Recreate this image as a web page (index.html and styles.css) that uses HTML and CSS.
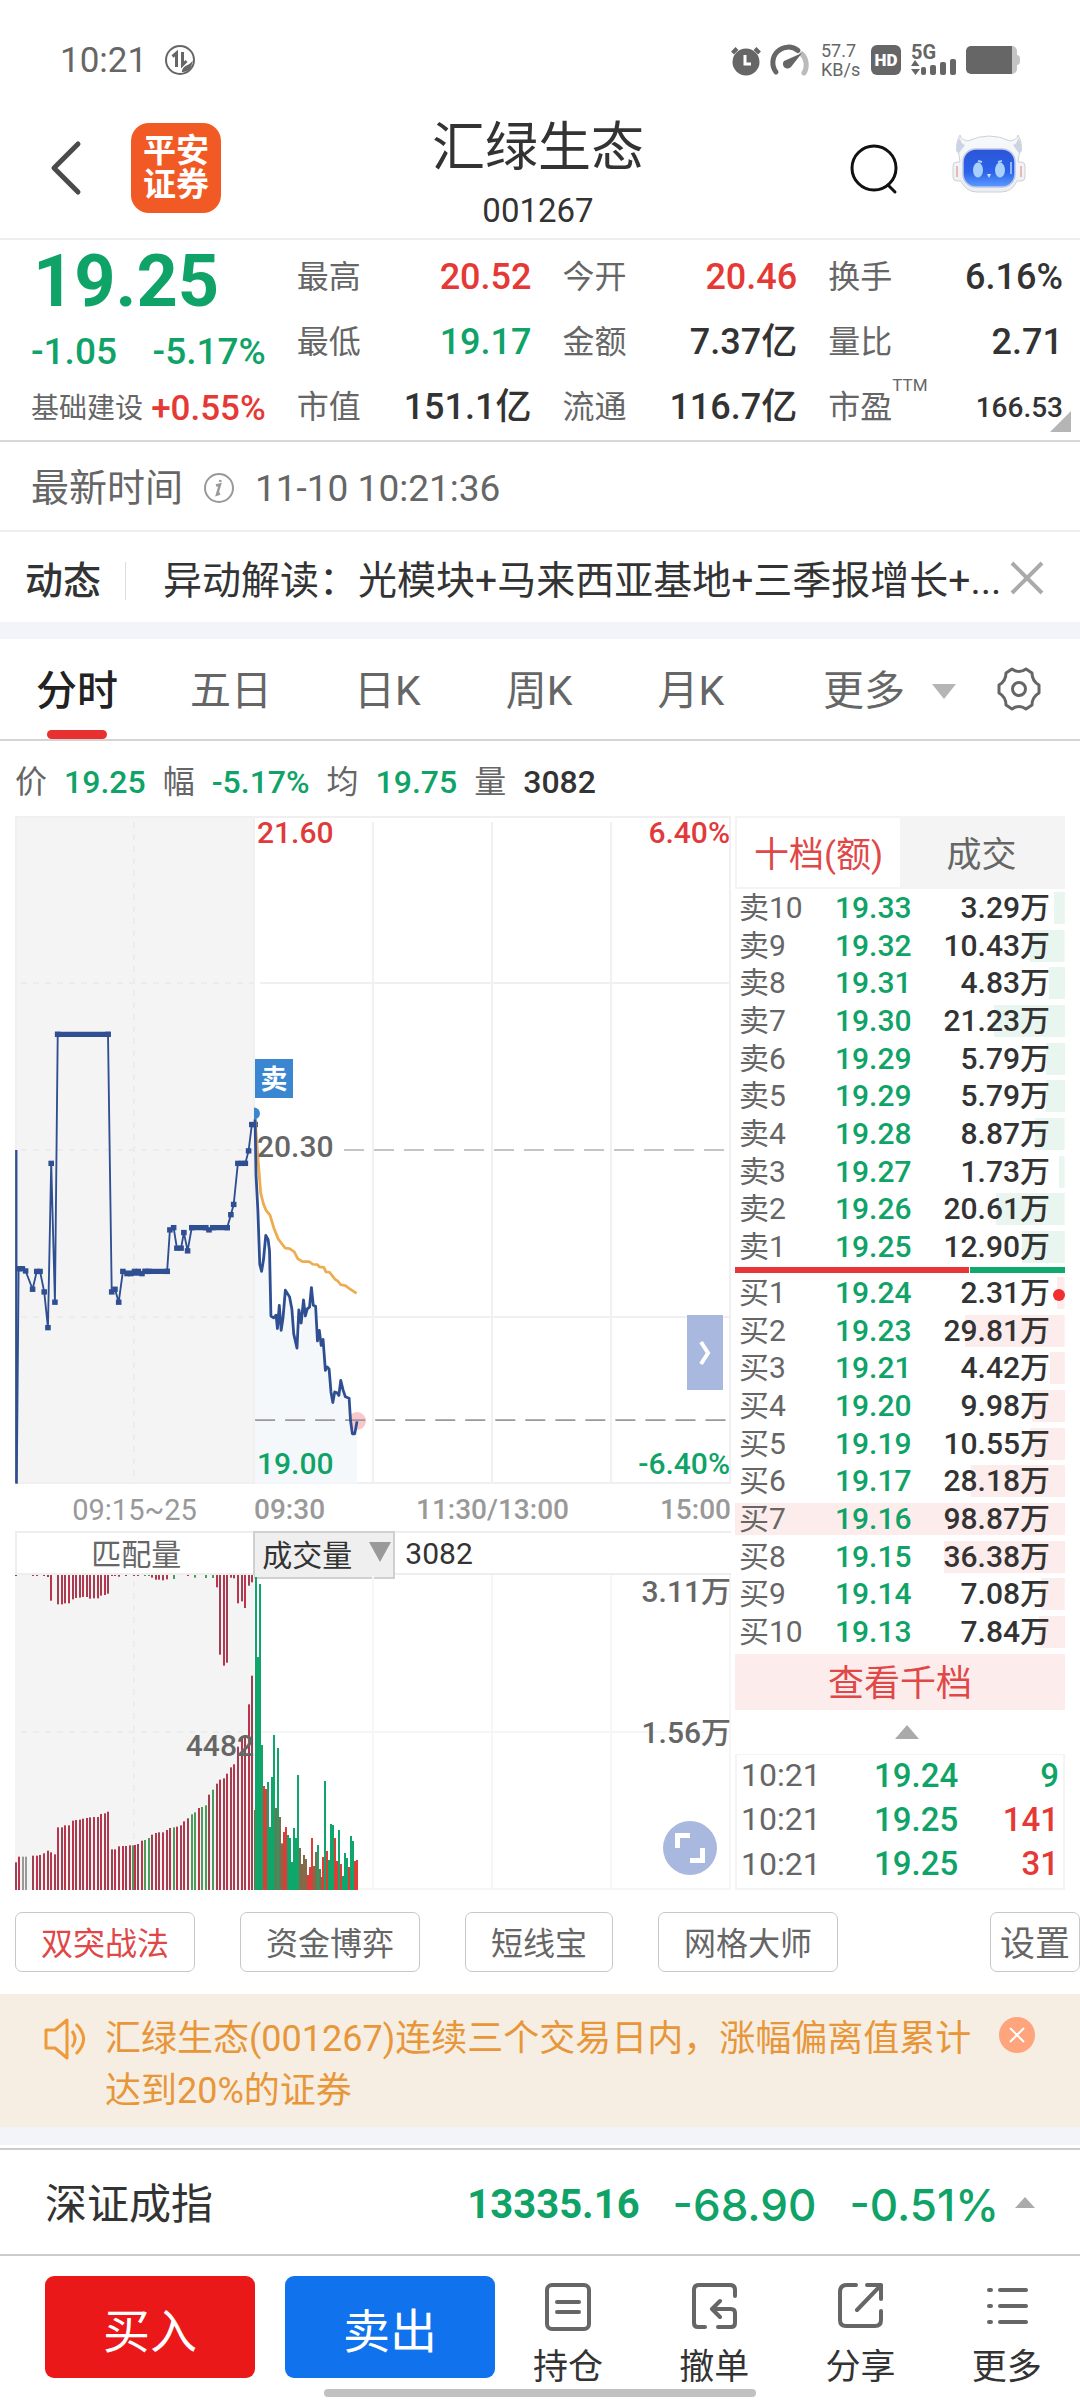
FILE: index.html
```html
<!DOCTYPE html>
<html lang="zh-CN">
<head>
<meta charset="utf-8">
<meta name="viewport" content="width=device-width, initial-scale=1">
<title>汇绿生态 001267</title>
<link rel="stylesheet" href="styles.css">
</head>
<body>
<div class="status">
  <span class="status-time">10:21</span>
  <svg class="status-left-icon" width="30" height="30" viewBox="0 0 30 30" fill="none" stroke="#666" stroke-width="2"><circle cx="15" cy="15" r="14"/><path d="M7.500 11.500 11.500 8v14M17.500 7v13l4-4" stroke-width="3"/><path d="M18 26c1-5 5-4 8-7-1 4-4 7-8 7z" fill="#666"/></svg>
  <div class="status-icons">
    <svg width="30" height="30" viewBox="0 0 30 30" fill="none" stroke="#666"><circle cx="15" cy="17" r="13.500" fill="#666" stroke="none"/><path d="M1.500 8 6 3.500M28.500 8 24 3.500" stroke-width="4"/><path d="M14 10v9h6" stroke="#fff" stroke-width="3"/></svg>
    <svg width="36" height="30" viewBox="0 0 36 30" fill="none" stroke-width="5" stroke-linecap="round"><path d="M33 28A16 16 0 0 0 31 9" stroke="#bbb"/><path d="M5 27A15.500 15.500 0 0 1 27 5.500" stroke="#666"/><path d="M31 8 20 22a4.500 4.500 0 0 1-7-6z" fill="#666" stroke="none"/></svg>
    <span class="net-speed">57.7<br>KB/s</span>
    <span class="hd">HD</span>
    <svg class="signal" width="45" height="40" viewBox="0 -4 45 40" fill="#666"><text class="signal-text" x="0" y="15">5G</text><path d="M4 16 8.500 22H0zM0 25h9l-4.500 6z"/><rect x="10" y="23" width="5" height="8" rx="2"/><rect x="19" y="21" width="6" height="10" rx="2"/><rect x="29" y="18" width="6" height="13" rx="2"/><rect x="39" y="15" width="6" height="16" rx="2"/></svg>
    <svg width="54" height="28" viewBox="0 0 54 28"><path d="M44 0h2a5 5 0 0 1 5 5v4q3 0 3 4v2q0 4-3 4v4a5 5 0 0 1-5 5h-2z" fill="#c4c4c4"/><path d="M5 0h41v28H5a5 5 0 0 1-5-5V5a5 5 0 0 1 5-5z" fill="#666"/></svg>
  </div>
</div>

<header class="header">
  <div class="header-left">
    <button class="icon-button" aria-label="返回"><svg width="32" height="54" viewBox="0 0 32 54" fill="none" stroke="#4a4a4a" stroke-width="5" stroke-linecap="round" stroke-linejoin="round"><path d="M28 3 4 27l24 24"/></svg></button>
    <div class="logo">平安<br>证券</div>
  </div>
  <div class="header-title">
    <h1>汇绿生态</h1>
    <p>001267</p>
  </div>
  <div class="header-right">
    <button class="icon-button" aria-label="搜索"><svg width="48" height="50" viewBox="0 0 48 50" fill="none" stroke="#111" stroke-width="3" stroke-linecap="round"><circle cx="24" cy="24" r="22"/><path d="m38 41 7 7"/></svg></button>
    <button class="icon-button robot" aria-label="智能助手"><svg width="74" height="60" viewBox="0 0 74 60">
      <defs>
        <linearGradient id="face" x1="0" y1="0" x2="0" y2="1"><stop offset="0" stop-color="#2c55d6"/><stop offset=".6" stop-color="#2b62ea"/><stop offset="1" stop-color="#5b9bff"/></linearGradient>
        <linearGradient id="shell" x1="0" y1="0" x2="0" y2="1"><stop offset="0" stop-color="#f8f9fa"/><stop offset="1" stop-color="#eceef2"/></linearGradient>
      </defs>
      <g fill="url(#shell)" stroke="#cdd0d6" stroke-width="1">
        <path d="M8 1q1 5 8 6 21-10 42 0 7-1 8-6 6 10 1 20l-1 7h3q4 0 4 4v11q0 4-4 4h-4q-5 11-16 11H25q-11 0-16-11H5q-4 0-4-4V32q0-4 4-4h3l-1-7Q2 11 8 1z"/>
      </g>
      <path d="M5 32v11M69 32v11" stroke="#e9b9b4" stroke-width="2"/>
      <path d="M4 17Q4 9 8 4q1 6 5 7l-6 8zM70 17q0-8-4-13-1 6-5 7l6 8z" fill="#ccd3e4"/>
      <rect x="11" y="15" width="52" height="38" rx="13" fill="url(#face)" stroke="#b9c6ea" stroke-width="1.500"/>
      <ellipse cx="26" cy="36" rx="5" ry="7.500" fill="#a9d0fb"/><ellipse cx="48" cy="36" rx="5" ry="7.500" fill="#a9d0fb"/>
      <path d="m26 27 4 1M50 27l-4 1" stroke="#a9d0fb" stroke-width="2"/>
      <path d="M35 40h4l-2 4z" fill="#cfe4ff"/><path d="M59 28v12" stroke="#8db6ff" stroke-width="2"/>
    </svg></button>
  </div>
</header>

<section class="quote">
  <div class="quote-main">
    <strong class="last down">19.25</strong>
    <div class="change down"><span>-1.05</span><span>-5.17%</span></div>
    <div class="sector"><span>基础建设</span><b class="up">+0.55%</b></div>
  </div>
  <dl class="quote-col">
    <div><dt>最高</dt><dd class="up">20.52</dd></div>
    <div><dt>最低</dt><dd class="down">19.17</dd></div>
    <div><dt>市值</dt><dd>151.1亿</dd></div>
  </dl>
  <dl class="quote-col">
    <div><dt>今开</dt><dd class="up">20.46</dd></div>
    <div><dt>金额</dt><dd>7.37亿</dd></div>
    <div><dt>流通</dt><dd>116.7亿</dd></div>
  </dl>
  <dl class="quote-col">
    <div><dt>换手</dt><dd>6.16%</dd></div>
    <div><dt>量比</dt><dd>2.71</dd></div>
    <div><dt>市盈<sup>TTM</sup></dt><dd class="small">166.53</dd></div>
  </dl>
  <span class="corner"></span>
</section>

<div class="time-row">
  <span>最新时间</span>
  <svg width="32" height="32" viewBox="0 0 32 32" fill="none" stroke="#999" stroke-width="2"><circle cx="16" cy="16" r="14"/><path d="M13 13.500l4-1-3 10 3-1M17.500 8l-.5 2" stroke-width="2.500"/></svg>
  <time>11-10 10:21:36</time>
</div>

<div class="news">
  <b>动态</b>
  <a href="#">异动解读：光模块+马来西亚基地+三季报增长+...</a>
  <button class="icon-button" aria-label="关闭"><svg width="34" height="34" viewBox="0 0 34 34" stroke="#aaa" stroke-width="4"><path d="m2 2 30 30M32 2 2 32"/></svg></button>
</div>

<nav class="tabs">
  <button class="active">分时</button>
  <button>五日</button>
  <button>日K</button>
  <button>周K</button>
  <button>月K</button>
  <button class="more">更多<span class="tri-down"></span></button>
  <button class="gear" aria-label="图表设置"><svg width="46" height="46" viewBox="0 0 46 46" fill="none" stroke="#666" stroke-width="3" stroke-linejoin="round"><path d="M16 3q7 5 14 0l6 4q0 8 7 12v8q-7 4-7 12l-6 4q-7-5-14 0l-6-4q0-8-7-12v-8q7-4 7-12z"/><circle cx="23" cy="23" r="6.500"/></svg></button>
</nav>

<div class="legend">
  <span>价</span><b class="down">19.25</b>
  <span>幅</span><b class="down">-5.17%</b>
  <span>均</span><b class="down">19.75</b>
  <span>量</span><b>3082</b>
</div>

<main class="board">
  <section class="charts">
    <div class="plot">
      <svg class="price-chart" viewBox="0 0 716 668" role="img" aria-label="分时走势">
        <rect width="239" height="668" fill="#f4f4f4"/>
        <g fill="none" stroke="#f0f0f0" stroke-width="2">
          <path d="M0 1h716M0 667h716M239 1v666M358 6v661M477 6v661M596 6v661M715 1v666M245 167h471M245 501h471M1 0v667"/>
          <path d="M119 6v661M6 167h233M6 334h233M6 501h233" stroke="#ececec" stroke-dasharray="6 6"/>
        </g>
        <path d="M329 334h383" stroke="#c4c4c4" stroke-width="2" stroke-dasharray="20 10"/>
        <circle cx="342" cy="605" r="9" fill="#f9c6cb"/>
        <g transform="translate(-15 -16) scale(.4655 .4464)" fill="none" stroke="#2f4f92" stroke-linejoin="round">
          <path d="M548 1531V840L554 920 562 1056 571 975 579 1010 582 1156 604 1188 613 1098 627 1140 638 1228 669 1092 682 1212 694 1208 703 1270 715 1350 732 1300 750 1340 757 1420 767 1392V1531z" fill="#f5f8fb" stroke="none"/>
          <path d="M548 1389H1560" stroke="#999" stroke-width="4" stroke-dasharray="43 21.500"/>
          <path d="M35 784V1531" stroke-width="5"/>
          <polyline class="auction" stroke-width="4" points="36,1531 40,1050 48,1050 55,1055 70,1096 79,1056 86,1056 95,1102 103,1182 110,814 118,1125 124,525 232,525 240,1102 247,1096 255,1125 264,1056 273,1061 281,1061 289,1056 297,1056 305,1061 312,1056 320,1056 359,1056 365,963 373,958 380,1004 389,1004 395,969 403,1010 412,958 442,958 449,963 457,958 488,958 496,929 502,906 511,814 519,814 527,814 534,786 541,727 548,727"/>
          <path d="M118 525H238M306 1056H365M268 1060H300M407 958H447M453 958H494" stroke-width="12"/>
          <polyline stroke="#edac4f" stroke-width="6" points="548,715 554,800 560,880 566,905 572,920 580,930 588,958 598,984 613,1004 622,1005 632,1012 640,1028 650,1034 664,1034 672,1040 682,1041 686,1046 696,1047 700,1057 708,1058 720,1074 726,1078 732,1086 742,1088 754,1097 766,1105"/>
          <polyline stroke-width="6" points="548,715 550,840 554,920 558,1040 562,1056 566,1030 571,975 576,985 579,1010 582,1156 588,1160 593,1154 596,1184 600,1132 604,1188 608,1160 613,1098 622,1113 627,1140 631,1196 638,1228 642,1142 647,1172 652,1120 656,1156 660,1140 665,1136 669,1092 673,1132 678,1134 682,1212 686,1188 690,1222 694,1208 699,1278 703,1270 707,1275 711,1326 715,1350 719,1326 724,1328 728,1334 732,1300 737,1322 742,1337 750,1340 753,1390 757,1420 762,1420 767,1392"/>
        </g>
        <path d="M239 291.500a6 6 0 0 1 0 12z" fill="#3a86d0"/>
        <rect x="240" y="243" width="38" height="39" fill="#3a86d0"/>
        <text class="sell-tag" x="259" y="273" text-anchor="middle">卖</text>
        <g class="scale">
          <text class="up" x="242" y="27">21.60</text>
          <text class="up" x="715" y="27" text-anchor="end">6.40%</text>
          <text x="242" y="341">20.30</text>
          <text class="down" x="242" y="658">19.00</text>
          <text class="down" x="715" y="658" text-anchor="end">-6.40%</text>
        </g>
      </svg>
      <button class="slide" aria-label="收起盘口"><svg width="14" height="26" viewBox="0 0 14 26" fill="none" stroke="#fff" stroke-width="4"><path d="m3 2 7 11-7 11"/></svg></button>
    </div>
    <div class="axis">
      <span class="axis-pre">09:15~25</span>
      <div class="axis-day"><span>09:30</span><span>11:30/13:00</span><span>15:00</span></div>
    </div>
    <div class="volume-head">
      <span class="match">匹配量</span>
      <div class="indicator">
        <span class="select-wrap"><select aria-label="指标"><option>成交量</option></select></span>
        <span>3082</span>
      </div>
    </div>
    <div class="plot">
      <svg class="volume-chart" viewBox="0 0 716 315" role="img" aria-label="成交量">
        <rect width="239" height="315" fill="#f4f4f4"/>
        <g fill="none" stroke="#f6f6f6" stroke-width="2">
          <path d="M358 0v315M477 0v315M596 0v315M715 0v315M239 157h477M239 314h477"/>
          <path d="M119 6v309M6 157h233" stroke="#ececec" stroke-dasharray="6 6"/>
        </g>
        <g id="bars"></g>
        <g class="scale">
          <text x="716" y="27" text-anchor="end">3.11万</text>
          <text x="716" y="168" text-anchor="end">1.56万</text>
          <text x="239" y="181" text-anchor="end">4482</text>
        </g>
      </svg>
      <button class="expand" aria-label="全屏"><svg width="30" height="30" viewBox="0 0 30 30" fill="none" stroke="#fff" stroke-width="5"><path d="M2.500 15V2.500H15M15 27.500h12.500V15"/></svg></button>
    </div>
  </section>

  <section class="book">
    <div class="book-tabs"><button class="active">十档(额)</button><button>成交</button></div>
    <table class="depth sell"><tbody id="sell"></tbody></table>
    <div class="ratio"><i></i><i></i></div>
    <table class="depth buy"><tbody id="buy"></tbody></table>
    <button class="thousand">查看千档</button>
    <div class="fold"><span class="tri-up"></span></div>
    <table class="ticks"><tbody>
      <tr><td>10:21</td><td class="down">19.24</td><td class="down">9</td></tr>
      <tr><td>10:21</td><td class="down">19.25</td><td class="up">141</td></tr>
      <tr><td>10:21</td><td class="down">19.25</td><td class="up">31</td></tr>
    </tbody></table>
  </section>
</main>

<div class="tools">
  <button class="up">双突战法</button>
  <button>资金博弈</button>
  <button>短线宝</button>
  <button>网格大师</button>
  <button class="setup">设置</button>
</div>

<aside class="notice">
  <svg width="44" height="44" viewBox="0 0 44 44" fill="none" stroke="#ee9a3a" stroke-width="3" stroke-linejoin="round"><path d="M3 13h9L24 3v38L12 31H3zM29 14q6 8 0 16M33 7q15 15 0 30"/></svg>
  <p>汇绿生态(001267)连续三个交易日内，涨幅偏离值累计达到20%的证券</p>
  <button aria-label="关闭提示"><svg width="16" height="16" viewBox="0 0 16 16" stroke="#fff" stroke-width="2"><path d="m1 1 14 14M15 1 1 15"/></svg></button>
</aside>

<a class="index" href="#">
  <span class="index-name">深证成指</span>
  <b class="index-value">13335.16</b>
  <span class="index-change">-68.90</span>
  <span class="index-change">-0.51%</span>
  <span class="tri-up small-tri"></span>
</a>

<footer class="actions">
  <button class="trade buy-button">买入</button>
  <button class="trade sell-button">卖出</button>
  <nav>
    <a href="#"><svg width="48" height="50" viewBox="0 0 48 50"><rect x="3" y="3" width="42" height="44" rx="5"/><path d="M13 20h22M13 30h22"/></svg>持仓</a>
    <a href="#"><svg width="48" height="50" viewBox="0 0 48 50"><path d="M45 14V8q0-5-5-5H9Q4 3 4 8v33q0 4 4 4h7M28 45h13q4 0 4-4V31q0-4-4-4H23M30 19l-8 8 8 8"/></svg>撤单</a>
    <a href="#"><svg width="48" height="50" viewBox="0 0 48 50"><path d="M19 3h-9Q3 3 3 10v28q0 6 6 6h29q6 0 6-6V29M30 3h14v14M44 3 20 28"/></svg>分享</a>
    <a href="#"><svg width="48" height="50" viewBox="0 0 48 50"><path d="M6 8h2M17 8h26M6 24h2M17 24h26M6 40h2M17 40h26"/></svg>更多</a>
  </nav>
</footer>
<div class="home"></div>
<script src="app.js"></script>
</body>
</html>
```
FILE: styles.css
```css
* { box-sizing: border-box; }
body {
  margin: 0;
  background: #fff;
  color: #333;
  font-family: Roboto, "Noto Sans CJK SC", sans-serif;
  font-size: 32px;
  line-height: 1;
}
button, select {
  margin: 0;
  padding: 0;
  border: 0;
  background: none;
  color: inherit;
  font: inherit;
}
h1, p, dl, dd { margin: 0; }
a { color: inherit; text-decoration: none; }
table { border-collapse: collapse; border-spacing: 0; }
td { padding: 0; }
svg { display: block; overflow: visible; }
.up { color: #e53935; }
.down { color: #0fa368; }
.icon-button { display: block; }

.status {
  display: flex;
  align-items: center;
  height: 100px;
  padding: 20px 60px 0;
  color: #666;
}
.status-time { font-size: 35px; }
.status-left-icon { margin-left: 18px; }
.status-icons { display: flex; align-items: center; gap: 10px; margin-left: auto; }
.net-speed { width: 40px; margin-left: 4px; font-size: 18px; line-height: 19px; }
.hd {
  width: 30px;
  border-radius: 6px;
  background: #666;
  color: #fff;
  font-size: 17px;
  font-weight: 900;
  line-height: 30px;
  text-align: center;
}
.signal-text { font-size: 20px; font-weight: 700; }

.header {
  display: grid;
  grid-template-columns: 1fr auto 1fr;
  height: 140px;
  padding: 0 54px 0 50px;
  border-bottom: 2px solid #eee;
}
.header-left { display: flex; align-items: center; gap: 49px; padding-bottom: 2px; }
.logo {
  width: 90px;
  height: 90px;
  padding-top: 11px;
  border-radius: 18px;
  background: #f15a24;
  color: #fff;
  font-size: 33px;
  font-weight: 700;
  line-height: 34px;
  text-align: center;
}
.header-title { text-align: center; }
h1 { padding-top: 12px; font-size: 53px; font-weight: 400; line-height: 72px; }
.header-title p { font-size: 33px; line-height: 54px; }
.header-right { display: flex; align-items: center; justify-content: flex-end; gap: 54px; }
.robot { padding-bottom: 10px; }

.quote {
  position: relative;
  display: grid;
  grid-template-columns: repeat(4, 1fr);
  gap: 31px;
  padding: 0 17px 0 31px;
  height: 202px;
  border-bottom: 2px solid #d8d8d8;
}
.last { display: block; padding-left: 2px; font-size: 72px; font-weight: 700; line-height: 83px; }
.change, .sector { display: flex; justify-content: space-between; font-size: 37px; font-weight: 500; line-height: 58px; }
.sector { color: #666; font-size: 28px; font-weight: 400; line-height: 56px; }
.sector b { font-size: 35px; font-weight: 500; }
.quote-col { padding-top: 5px; }
.quote-col div { display: flex; justify-content: space-between; line-height: 65px; }
dt { color: #666; font-size: 32px; white-space: nowrap; }
dd { font-size: 36px; font-weight: 500; white-space: nowrap; }
dd.small { font-size: 28px; }
sup { font-size: 17px; line-height: 1; vertical-align: 27px; }
.corner {
  position: absolute;
  right: 9px;
  bottom: 8px;
  border-bottom: 21px solid #b5b5b5;
  border-left: 21px solid transparent;
}

.time-row {
  display: flex;
  align-items: center;
  gap: 20px;
  height: 90px;
  padding: 4px 31px 0;
  border-bottom: 2px solid #eee;
  color: #666;
  font-size: 38px;
}
.time-row time { font-size: 37px; }

.news {
  display: flex;
  align-items: center;
  height: 107px;
  padding: 8px 36px 0 25px;
  border-bottom: 17px solid #f2f4f9;
  font-size: 38px;
}
.news b { font-weight: 500; padding-right: 24px; border-right: 1px solid #ddd; }
.news a {
  flex: 1;
  min-width: 0;
  overflow: hidden;
  padding-left: 37px;
  font-size: 39px;
  line-height: 58px;
  white-space: nowrap;
}
.news button { padding-bottom: 6px; }

.tabs {
  display: flex;
  align-items: center;
  height: 102px;
  padding: 0 38px 0 36px;
  border-bottom: 2px solid #d4d4d4;
  color: #666;
  font-size: 41px;
}
.tabs button { position: relative; margin-right: 85px; padding-top: 4px; line-height: 96px; white-space: nowrap; }
.tabs button:nth-child(1) { margin-right: 72px; }
.tabs button:nth-child(2) { margin-right: 82px; }
.tabs .active { color: #222; font-weight: 500; }
.tabs .active::after {
  content: "";
  position: absolute;
  right: 11px;
  bottom: 0;
  left: 11px;
  height: 9px;
  border-radius: 5px;
  background: #e93030;
}
.tabs .more { display: flex; align-items: center; gap: 27px; margin-right: 0; margin-left: auto; }
.tabs .gear { margin: 0 0 0 40px; padding: 0; }
.tri-down { border: 12px solid transparent; border-top: 15px solid #b5b5b5; border-bottom: 0; }
.tri-up { border: 12px solid transparent; border-top: 0; border-bottom: 14px solid #aaa; }

.legend { display: flex; align-items: center; gap: 17px; height: 74px; padding: 8px 15px 0; color: #666; font-size: 32px; }
.legend b { font-size: 32px; font-weight: 500; }
.legend b:not(.down) { color: #333; }

.board {
  display: grid;
  grid-template-columns: 716fr 330fr;
  gap: 4px;
  padding: 1px 15px 0;
}
.plot { position: relative; }
.price-chart, .volume-chart { width: 100%; height: auto; }
.scale { fill: #666; font-size: 30px; font-weight: 500; }
.scale .up { fill: #e03a3a; }
.scale .down { fill: #0fa368; }
.sell-tag { fill: #fff; font-size: 27px; font-weight: 700; }
.slide {
  position: absolute;
  right: 8px;
  bottom: 94px;
  display: grid;
  place-items: center;
  width: 36px;
  height: 75px;
  background: #a9b8df;
}
.expand {
  position: absolute;
  right: 14px;
  bottom: 15px;
  display: grid;
  place-items: center;
  width: 54px;
  height: 54px;
  border-radius: 50%;
  background: #a9b8df;
}
.axis, .volume-head { display: grid; grid-template-columns: 239fr 477fr; }
.axis { height: 47px; color: #999; line-height: 52px; }
.axis-pre { font-size: 29px; text-align: center; }
.axis-day { display: flex; justify-content: space-between; font-size: 28px; font-weight: 500; }
.volume-head { height: 44px; border: 2px solid #eee; border-right: 0; font-size: 30px; }
.match { color: #666; line-height: 44px; text-align: center; }
.indicator { display: flex; gap: 10px; line-height: 42px; }
.select-wrap { position: relative; display: flex; margin: -2px 0 -2px -2px; border: 2px solid #d0d0d0; background: #efefef; }
.select-wrap::after {
  content: "";
  position: absolute;
  top: 9px;
  right: 2px;
  border: 11px solid transparent;
  border-top: 20px solid #999;
  border-bottom: 0;
  pointer-events: none;
}
.select-wrap select { appearance: none; width: 138px; padding: 2px 0 0 7px; outline: 0; }

.book { display: flex; flex-direction: column; min-width: 0; }
.book-tabs { display: grid; grid-template-columns: 1fr 1fr; height: 73px; border: 2px solid #f4f4f4; font-size: 35px; }
.book-tabs button { color: #666; background: #f4f4f4; padding-top: 6px; }
.book-tabs .active, .thousand { color: #e04848; }
.book-tabs .active { background: #fff; }
.depth { width: 100%; height: 377px; table-layout: fixed; font-size: 30px; }
.depth tr {
  background-position: right center;
  background-repeat: no-repeat;
  background-size: var(--share) 32px;
}
.sell tr { background-image: linear-gradient(#e9f6ef, #e9f6ef); }
.buy tr { background-image: linear-gradient(#fdecec, #fdecec); }
.depth td { line-height: 36px; white-space: nowrap; }
.depth td:nth-child(1) { width: 100px; padding-left: 4px; color: #666; }
.depth td:nth-child(2) { width: 90px; color: #0fa368; font-weight: 500; }
.depth td:nth-child(3) { padding-right: 15px; font-weight: 500; text-align: right; }
.latest { position: relative; }
.latest::after {
  content: "";
  position: absolute;
  top: 15px;
  right: 0;
  width: 12px;
  height: 12px;
  border-radius: 50%;
  background: #f03030;
}
.ratio { display: grid; grid-template-columns: 234fr 95fr; gap: 1px; height: 6px; margin: 1px 0; }
.ratio i { background: #e93535; }
.ratio i + i { background: #0fa96e; }
.thousand { height: 56px; margin-top: 3px; padding-top: 3px; background: #fdecec; font-size: 36px; }
.fold { display: grid; place-items: center; height: 44px; padding-left: 14px; }
.ticks { width: 100%; height: 136px; border: 2px solid #f4f4f4; border-top-width: 1px; font-weight: 500; font-size: 33px; }
.ticks td:nth-child(1) { width: 138px; padding-left: 4px; color: #666; font-size: 32px; font-weight: 400; }
.ticks td:nth-child(3) { padding-right: 4px; text-align: right; }
.ticks td { padding-bottom: 4px; }

.tools { display: flex; gap: 45px; padding: 22px 0 22px 15px; color: #666; }
.tools button { height: 60px; padding: 4px 25px 0; border: 1px solid #c8c8c8; border-radius: 7px; font-size: 32px; }
.tools .up { color: #e04848; }
.tools .setup { margin-left: auto; padding: 4px 9px 0; font-size: 35px; }

.notice {
  display: flex;
  align-items: flex-start;
  gap: 18px;
  padding: 19px 45px 10px 43px;
  border-bottom: 18px solid #f2f4f9;
  background: #f6eee3;
  background-clip: padding-box;
  color: #e8963a;
}
.notice svg { flex: none; margin-top: 4px; }
.notice p { flex: 1; font-size: 36px; line-height: 52px; }
.notice button {
  display: grid;
  place-items: center;
  width: 36px;
  height: 36px;
  margin-top: 4px;
  border-radius: 50%;
  background: #ffa57d;
}
.notice button svg { margin: 0; }

.index {
  display: flex;
  align-items: center;
  height: 108px;
  margin-top: 3px;
  padding: 6px 45px 0;
  border-top: 2px solid #ccc;
  border-bottom: 2px solid #ccc;
  color: #0fa368;
}
.index-name { margin-right: auto; color: #333; font-size: 42px; }
.index-value { font-size: 40px; }
.index-change { margin-left: 33px; font-family: Inter, sans-serif; font-size: 44px; font-weight: 500; }
.small-tri { margin: 0 0 6px 16px; border-width: 0 10px 11px; }

.actions { display: flex; height: 133px; padding: 20px 0 11px 45px; }
.trade { flex: none; width: 210px; height: 102px; margin-right: 30px; border-radius: 9px; color: #fff; font-size: 47px; padding-top: 8px; }
.buy-button { background: #ea1819; }
.sell-button { margin-right: 0; background: #1072ec; }
.actions nav { display: grid; flex: 1; grid-template-columns: repeat(4, 1fr); }
.actions a { display: flex; flex-direction: column; align-items: center; gap: 18px; padding-top: 6px; font-size: 35px; }
.actions svg { fill: none; stroke: #666; stroke-width: 4; stroke-linecap: round; stroke-linejoin: round; }
.home { width: 40%; height: 8px; margin: 0 auto; border-radius: 4px; background: #c1c1c1; }
```
FILE: app.js
```javascript
// Order book: label, price, amount in 万
const sell = [
  ['卖10', '19.33', '3.29'], ['卖9', '19.32', '10.43'], ['卖8', '19.31', '4.83'],
  ['卖7', '19.30', '21.23'], ['卖6', '19.29', '5.79'], ['卖5', '19.29', '5.79'],
  ['卖4', '19.28', '8.87'], ['卖3', '19.27', '1.73'], ['卖2', '19.26', '20.61'],
  ['卖1', '19.25', '12.90']
];
const buy = [
  ['买1', '19.24', '2.31'], ['买2', '19.23', '29.81'], ['买3', '19.21', '4.42'],
  ['买4', '19.20', '9.98'], ['买5', '19.19', '10.55'], ['买6', '19.17', '28.18'],
  ['买7', '19.16', '98.87'], ['买8', '19.15', '36.38'], ['买9', '19.14', '7.08'],
  ['买10', '19.13', '7.84']
];
const peak = 98.87;
function fill(id, rows) {
  document.getElementById(id).innerHTML = rows.map(([name, price, amount]) =>
    `<tr style="--share:${(amount / peak * 100).toFixed(1)}%"><td>${name}</td><td>${price}</td>` +
    `<td${name === '买1' ? ' class="latest"' : ''}>${amount}万</td></tr>`).join('');
}
fill('sell', sell);
fill('buy', buy);

// Volume bars: x, edge and an optional colour key, in thirds of a chart unit
const colours = { G: '#4b9b5c', a: '#999', g: '#10a66b', r: '#df3d38', b: '#85694b' };
const lower = '18,877 27,860 39,860,a 48,860,a 69,857 81,857 90,855 102,850 114,842 123,847 135,853 144,772 156,772 165,766 177,766 189,752 198,750 210,749 219,746 231,744 240,742 252,741 264,741 273,732 285,730 294,725 306,838 315,838 327,829 339,828 348,828 360,826 369,826,G 375,825 384,822 396,812 405,810,G 417,804,G 426,794 438,789 447,787 459,787 471,780 480,774 492,772,G 501,770 513,766 522,754 534,745 546,733,G 555,727,G 567,714 576,711,G 588,706,G 597,674 609,659,G 621,641 630,629 642,625 651,611 663,592 672,583 684,530 696,505 705,500 717,403 726,317';
const upper = '18,18 69,18 81,18 102,18 114,21 123,92 144,103 156,103 165,100 177,100 189,88 198,84 210,83 219,81 231,81 240,86 252,85 264,85 273,77 285,75 294,71 306,18 315,18 327,20 348,18 372,18 384,18 405,18,G 417,18,G 426,23 438,29 447,29 459,31 471,28 492,27,G 534,18 555,23,G 588,24,G 609,24,G 621,52 630,254 642,287 651,278 663,23 672,25 684,100 696,94 705,114 717,47 726,37';
const day = '735,720,b 738,21,g 744,261,g 750,42,g 756,525,g 762,648,r 768,657,r 774,636,g 780,771,g 786,621,g 792,495,g 798,714,b 804,534,g 810,741,b 816,820,b 822,786,r 828,771,r 834,795,g 840,804,g 846,876,g 852,774,g 858,804,g 864,615,g 870,834,b 876,882,b 882,855,b 888,867,b 894,915,r 900,891,r 906,804,r 912,888,b 918,846,b 924,825,g 930,897,b 936,921,b 939,861,r 945,633,g 951,843,r 957,870,g 963,762,g 969,765,g 975,804,r 981,873,r 987,780,g 993,882,r 999,918,g 1005,849,g 1011,864,g 1017,891,r 1023,798,g 1029,813,g 1035,873,r 1041,870,r';
function bars(list, fromTop) {
  return list.split(' ').map((item, i) => {
    const [x, edge, key] = item.split(',');
    const colour = colours[key] || (i % 2 ? '#bd334a' : '#9f3f54');
    const y = fromTop ? 15 : +edge;
    const height = fromTop ? edge - 15 : 960 - edge;
    return `<rect x="${x - 3}" y="${y}" width="6" height="${height}" fill="${colour}"/>`;
  }).join('');
}
document.getElementById('bars').innerHTML =
  `<g transform="translate(-5 -5) scale(.33333)">${bars(lower)}${bars(upper, true)}${bars(day)}</g>`;

// Square marks on the call auction points outside the flat runs
const line = document.querySelector('.auction');
for (const { x, y } of Array.from(line.points).slice(1)) {
  const mark = document.createElementNS('http://www.w3.org/2000/svg', 'rect');
  mark.setAttribute('x', x - 6);
  mark.setAttribute('y', y - 6);
  mark.setAttribute('width', 12);
  mark.setAttribute('height', 12);
  mark.setAttribute('fill', '#2f4f92');
  mark.setAttribute('stroke', 'none');
  line.after(mark);
}
```
